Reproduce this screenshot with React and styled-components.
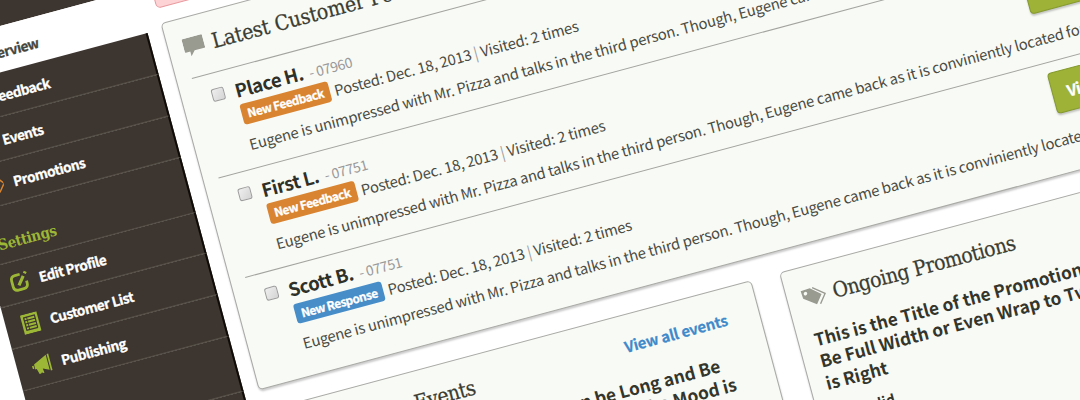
import React from "react";
import styled, { createGlobalStyle } from "styled-components";

const Global = createGlobalStyle`
  *{box-sizing:border-box}
  html,body{margin:0;padding:0;background:#fff;overflow:hidden}
  svg{display:block}
`;
const sans = `"Noto Sans CJK SC", "Noto Sans", sans-serif`;
const slab = `"DejaVu Serif Condensed", "DejaVu Serif", serif`;

const Viewport = styled.main`width:1080px;height:400px;overflow:hidden;background:#fff;font-family:${sans};color:#4b4c43;`;
const Plane = styled.div`
  width:1266px;height:760px;margin-left:-79.5px;display:flex;gap:15.2px;
  transform:rotate(-15deg);transform-origin:79px 0;white-space:nowrap;
`;
const Sidebar = styled.nav`width:213px;flex:none;height:760px;display:flex;flex-direction:column;`;
const TopBar = styled.div`height:25px;flex:none;background:#3d352f;`;
const NavItem = styled.a`
  display:flex;align-items:center;flex:none;height:${p => p.$active ? 45.2 : 42.85}px;padding:1.5px 0 0 14.5px;gap:10.5px;
  background:${p => p.$active ? "#fff" : "#3d352f"};color:${p => p.$active ? "#45463c" : "#fff"};
  border-bottom:1px solid ${p => p.$active ? "#fff" : "#57524a"};
  border-right:${p => p.$active ? 0 : 2}px solid #0f0b07;
  font:bold 13.6px/20px ${sans};letter-spacing:-.45px;-webkit-text-stroke:.3px currentColor;
`;
const NavIcon = styled.span`width:20px;height:20px;flex:none;color:${p => p.$color};-webkit-text-stroke:0;`;
const NavLabel = styled.span`padding-top:${p => p.$drop || 0}px;`;
const NavHeading = styled.div`
  height:56.8px;flex:none;padding:28px 0 0 14px;border-bottom:1px solid #57524a;border-right:2px solid #0f0b07;
  background:#3d352f;color:#9cb636;font:bold 15px/20px ${slab};letter-spacing:-.4px;
`;
const NavFill = styled.div`flex:1;background:#3d352f;border-right:2px solid #0f0b07;`;
const Content = styled.div`width:1037px;flex:none;display:flex;flex-direction:column;`;
const Alert = styled.div`height:48.5px;background:#fdd3d6;border:1px solid #e89a9e;border-radius:5px;margin-bottom:15px;`;
const Card = styled.section`
  background:#f8faf6;border:1px solid #a9aaa6;border-radius:5px;box-shadow:0 2px 2px rgba(0,0,0,.2);
  height:${p => p.$h}px;padding:${p => p.$pad};min-width:0;
`;
const CardHead = styled.header`display:flex;align-items:center;height:${p => p.$h}px;gap:8px;`;
const HeadIcon = styled.span`width:${p => p.$w}px;flex:none;color:#999a90;margin-left:${p => p.$shift || 0}px;`;
const HeadTitle = styled.h2`
  margin:0;font:normal 21px/28px ${slab};color:#3b3c31;letter-spacing:${p => p.$ls || -0.47}px;
  -webkit-text-stroke:.25px #3b3c31;
`;
const HeadLink = styled.a`
  margin-left:auto;margin-right:16px;color:#3f8aca;font:bold 15px/22px ${sans};
  letter-spacing:-.23px;-webkit-text-stroke:.2px #3f8aca;
`;
const Row = styled.article`display:flex;height:103.15px;border-top:1px solid #a3a49f;padding-left:14.5px;`;
const Check = styled.span`
  width:13px;height:13px;flex:none;margin:15px 11px 0 0;border:1px solid #9c9c9c;border-radius:2.5px;
  background:linear-gradient(135deg,#efefef,#d4d4d4);
`;
const RowBody = styled.div`flex:1;min-width:0;`;
const RowName = styled.div`display:flex;align-items:baseline;gap:6px;height:37px;padding-top:8px;line-height:28px;`;
const Name = styled.strong`font-size:18.5px;color:#2f3027;letter-spacing:-.42px;`;
const Code = styled.span`font-size:14px;color:#999;letter-spacing:-.4px;`;
const Meta = styled.div`display:flex;align-items:center;height:21px;gap:5px;font-size:14.8px;line-height:21px;letter-spacing:-.17px;`;
const Badge = styled.span`
  width:91px;height:20.5px;border-radius:3px;text-align:center;color:#fff;flex:none;
  background:${p => p.$tone};font:bold 11.8px/20px ${sans};letter-spacing:-.48px;-webkit-text-stroke:.3px #fff;
`;
const Pipe = styled.span`color:#999;margin:0 3px;`;
const Desc = styled.p`margin:8px 0 0;font-size:14.8px;line-height:24px;letter-spacing:-.185px;`;
const Action = styled.button`
  width:164px;height:42px;flex:none;margin:9.5px 14px 0 0;padding:0 0 0 14px;text-align:left;
  border:1px solid #84992c;border-radius:4px;background:#9db236;color:#fff;font:bold 15.5px/22px ${sans};
  letter-spacing:-.4px;-webkit-text-stroke:.3px #fff;box-shadow:0 2px 2px rgba(0,0,0,.22);
`;
const Lower = styled.div`display:grid;grid-template-columns:503.5px 503.5px;gap:29.5px;margin-top:21px;`;
const Title = styled.h3`
  margin:-.5px 0 0 -.5px;font:bold 17.3px/22.8px ${sans};color:#34352b;
  text-align:${p => p.$end ? "right" : "left"};
`;
const Line = styled.span`display:block;padding-right:${p => p.$inset || 0}px;`;
const Valid = styled.p`margin:9.5px 0 0;font:bold 14px/22px ${sans};color:#34352b;`;

const Bubble = () => <svg viewBox="0 0 21 19" width="21" height="19" fill="currentColor"><path d="M1 0h19q1 0 1 1v12q0 1-1 1h-10l-4.500 5v-5H1q-1 0-1-1V1q0-1 1-1z" /></svg>;
const Tags = () => <svg viewBox="0 0 26 20" width="26" height="20" fill="currentColor"><path fillRule="evenodd" d="M1 1.500L10.500 1l10 8.500-7 8.800L1.500 9.500zM5 3.300a1.800 1.800 0 1 0 .01 0z" /><path d="M13 1l11 9-7 8.800" fill="none" stroke="currentColor" strokeWidth="1.400" /></svg>;
const Edit = () => <svg viewBox="0 0 20 20" width="20" height="20" fill="none" stroke="currentColor" strokeWidth="2.800"><path d="M12 3H7Q2.500 3 2.500 7.500v6Q2.500 18 7 18h5.500q4.500 0 4.500-4.500V11" /><path d="M8.500 13.500l6.500-8M16.700 3.400l1.500-1.800" strokeWidth="3.200" /></svg>;
const ListIcon = () => <svg viewBox="0 0 20 20" width="20" height="20" fill="none"><path fill="currentColor" d="M1.500 0h17v20h-17z" /><path stroke="#3d352f" strokeWidth="1.200" d="M4 3.200h12M4 6.400h12M4 9.600h12M4 12.800h12M4 16h12M4.500 3v13M15.700 3v13" /><path stroke="#3d352f" strokeWidth=".8" d="M7.500 3v13" /></svg>;
const Horn = () => <svg viewBox="0 0 20 20" width="20" height="20" fill="currentColor"><path d="M16.300 1.500v15.500L10 14l.5 4.500H9l-.8-1-1 1H5.500L4 13H2.500V8zM17.300 1H19v17h-1.700zM0 9h1.800v3H0z" /></svg>;
const TagOutline = () => <svg viewBox="0 0 20 20" width="20" height="20" fill="none" stroke="currentColor" strokeWidth="1.500"><path d="M0 2.500h14.500l6 7.500-6 7.500H0z" /><path d="M3 7h10l2.500 3-2.500 3H3z" fill="currentColor" /></svg>;

const rows = [
  { name: "Place H.", code: "07960", tag: "New Feedback", tone: "#d98430" },
  { name: "First L.", code: "07751", tag: "New Feedback", tone: "#d98430" },
  { name: "Scott B.", code: "07751", tag: "New Response", tone: "#478dc8" },
];

export default function App() {
  return (
    <Viewport>
      <Global />
      <Plane>
        <Sidebar>
          <TopBar />
          <NavItem $active><NavIcon /><NavLabel $drop={4}>Overview</NavLabel></NavItem>
          <NavItem><NavIcon /><NavLabel>Feedback</NavLabel></NavItem>
          <NavItem><NavIcon /><NavLabel>Events</NavLabel></NavItem>
          <NavItem><NavIcon $color="#d98430"><TagOutline /></NavIcon><NavLabel>Promotions</NavLabel></NavItem>
          <NavHeading>Settings</NavHeading>
          <NavItem><NavIcon $color="#9cb636"><Edit /></NavIcon><NavLabel>Edit Profile</NavLabel></NavItem>
          <NavItem><NavIcon $color="#9cb636"><ListIcon /></NavIcon><NavLabel>Customer List</NavLabel></NavItem>
          <NavItem><NavIcon $color="#9cb636"><Horn /></NavIcon><NavLabel>Publishing</NavLabel></NavItem>
          <NavHeading />
          <NavFill />
        </Sidebar>
        <Content>
          <Alert />
          <Card $h={380.5} $pad="0 15px">
            <CardHead $h={60.5}><HeadIcon $w={21}><Bubble /></HeadIcon><HeadTitle $ls={-0.13}>Latest Customer Feedback</HeadTitle></CardHead>
            {rows.map((r, i) => (
              <Row key={i}>
                <Check />
                <RowBody>
                  <RowName><Name>{r.name}</Name><Code>- {r.code}</Code></RowName>
                  <Meta><Badge $tone={r.tone}>{r.tag}</Badge><span>Posted: Dec. 18, 2013<Pipe>|</Pipe>Visited: 2 times</span></Meta>
                  <Desc>Eugene is unimpressed with Mr. Pizza and talks in the third person. Though, Eugene came back as it is conviniently located for</Desc>
                </RowBody>
                <Action>View Feedback</Action>
              </Row>
            ))}
          </Card>
          <Lower>
            <Card $h={260} $pad="0 16px">
              <CardHead $h={62}><HeadIcon $w={22} /><HeadTitle>Upcoming Events</HeadTitle><HeadLink>View all events</HeadLink></CardHead>
              <Title $end><Line $inset={35}>It can be Long and Be</Line><Line $inset={24}>Wrap if the Mood is</Line></Title>
            </Card>
            <Card $h={260} $pad="0 16px">
              <CardHead $h={62}><HeadIcon $w={24.5} $shift={-2.5}><Tags /></HeadIcon><HeadTitle>Ongoing Promotions</HeadTitle></CardHead>
              <Title><Line>This is the Title of the Promotion. It can</Line><Line>Be Full Width or Even Wrap to Two</Line><Line>is Right</Line></Title>
              <Valid>Not Valid</Valid>
            </Card>
          </Lower>
        </Content>
      </Plane>
    </Viewport>
  );
}
